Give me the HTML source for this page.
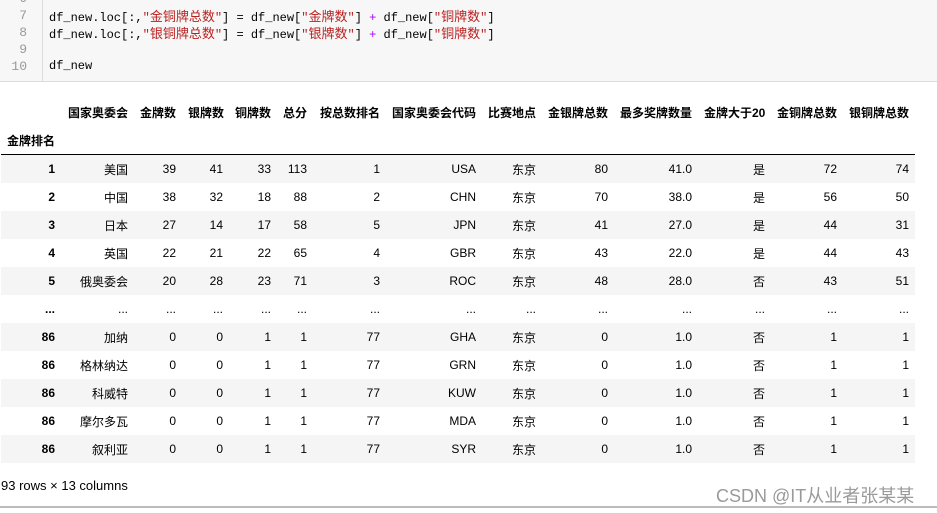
<!DOCTYPE html>
<html><head><meta charset="utf-8"><style>
body{margin:0;width:937px;height:513px;background:#fff;position:relative;overflow:hidden;font-family:"Liberation Sans","Noto Sans CJK SC",sans-serif;}
.code{position:absolute;left:0;top:0;width:937px;height:81px;background:#f7f7f7;border-bottom:1px solid #dcdcdc;}
.gut{position:absolute;left:0;top:0;width:42px;height:81px;border-right:1px solid #ddd;}
.ln{position:absolute;width:27px;text-align:right;color:#999;font:13px "Liberation Mono","Noto Sans CJK SC",monospace;}
.cl{position:absolute;left:49px;font:12px "Liberation Mono","Noto Sans CJK SC",monospace;color:#000;white-space:pre;line-height:17px;}
.cl .c{font-size:13px;font-family:"Noto Sans CJK SC",sans-serif;}
.s{color:#ba2121}.p{color:#a0f}
table{position:absolute;left:1px;top:98px;width:914px;border-collapse:collapse;table-layout:fixed;font-size:12px;color:#000;}
td,th{padding:0 6px;text-align:right;white-space:nowrap;height:28px;overflow:hidden;}
thead th{font-weight:bold;vertical-align:middle;}
thead tr.b th{border-bottom:1px solid #000;}
tbody tr:nth-child(odd){background:#f5f5f5;}
tbody th{font-weight:bold;}
.foot{position:absolute;left:1px;top:478px;font-size:13px;color:#000;}
.wm{position:absolute;left:716px;top:482px;font-size:18px;color:#9a9a9a;}
.bl{position:absolute;left:0;top:506px;width:937px;height:2px;background:#bbb;}
</style></head><body>
<div class="code"><div class="gut"></div>
<div class="ln" style="top:-9px">6</div>
<div class="ln" style="top:8px">7</div>
<div class="ln" style="top:25px">8</div>
<div class="ln" style="top:42px">9</div>
<div class="ln" style="top:59px">10</div>
<div class="cl" style="top:7px">df_new.loc[:,<span class="s">"<span class="c">金铜牌总数</span>"</span>] = df_new[<span class="s">"<span class="c">金牌数</span>"</span>] <span class="p">+</span> df_new[<span class="s">"<span class="c">铜牌数</span>"</span>]</div>
<div class="cl" style="top:24px">df_new.loc[:,<span class="s">"<span class="c">银铜牌总数</span>"</span>] = df_new[<span class="s">"<span class="c">银牌数</span>"</span>] <span class="p">+</span> df_new[<span class="s">"<span class="c">铜牌数</span>"</span>]</div>
<div class="cl" style="top:58px">df_new</div>
</div>
<table>
<colgroup><col style="width:60px"><col style="width:73px"><col style="width:48px"><col style="width:47px"><col style="width:48px"><col style="width:36px"><col style="width:73px"><col style="width:96px"><col style="width:60px"><col style="width:72px"><col style="width:84px"><col style="width:73px"><col style="width:72px"><col style="width:72px"></colgroup>
<thead>
<tr><th></th><th>国家奥委会</th><th>金牌数</th><th>银牌数</th><th>铜牌数</th><th>总分</th><th>按总数排名</th><th>国家奥委会代码</th><th>比赛地点</th><th>金银牌总数</th><th>最多奖牌数量</th><th>金牌大于20</th><th>金铜牌总数</th><th>银铜牌总数</th></tr>
<tr class="b"><th style="text-align:left">金牌排名</th><th></th><th></th><th></th><th></th><th></th><th></th><th></th><th></th><th></th><th></th><th></th><th></th><th></th></tr>
</thead>
<tbody>
<tr><th>1</th><td>美国</td><td>39</td><td>41</td><td>33</td><td>113</td><td>1</td><td>USA</td><td>东京</td><td>80</td><td>41.0</td><td>是</td><td>72</td><td>74</td></tr>
<tr><th>2</th><td>中国</td><td>38</td><td>32</td><td>18</td><td>88</td><td>2</td><td>CHN</td><td>东京</td><td>70</td><td>38.0</td><td>是</td><td>56</td><td>50</td></tr>
<tr><th>3</th><td>日本</td><td>27</td><td>14</td><td>17</td><td>58</td><td>5</td><td>JPN</td><td>东京</td><td>41</td><td>27.0</td><td>是</td><td>44</td><td>31</td></tr>
<tr><th>4</th><td>英国</td><td>22</td><td>21</td><td>22</td><td>65</td><td>4</td><td>GBR</td><td>东京</td><td>43</td><td>22.0</td><td>是</td><td>44</td><td>43</td></tr>
<tr><th>5</th><td>俄奥委会</td><td>20</td><td>28</td><td>23</td><td>71</td><td>3</td><td>ROC</td><td>东京</td><td>48</td><td>28.0</td><td>否</td><td>43</td><td>51</td></tr>
<tr><th>...</th><td>...</td><td>...</td><td>...</td><td>...</td><td>...</td><td>...</td><td>...</td><td>...</td><td>...</td><td>...</td><td>...</td><td>...</td><td>...</td></tr>
<tr><th>86</th><td>加纳</td><td>0</td><td>0</td><td>1</td><td>1</td><td>77</td><td>GHA</td><td>东京</td><td>0</td><td>1.0</td><td>否</td><td>1</td><td>1</td></tr>
<tr><th>86</th><td>格林纳达</td><td>0</td><td>0</td><td>1</td><td>1</td><td>77</td><td>GRN</td><td>东京</td><td>0</td><td>1.0</td><td>否</td><td>1</td><td>1</td></tr>
<tr><th>86</th><td>科威特</td><td>0</td><td>0</td><td>1</td><td>1</td><td>77</td><td>KUW</td><td>东京</td><td>0</td><td>1.0</td><td>否</td><td>1</td><td>1</td></tr>
<tr><th>86</th><td>摩尔多瓦</td><td>0</td><td>0</td><td>1</td><td>1</td><td>77</td><td>MDA</td><td>东京</td><td>0</td><td>1.0</td><td>否</td><td>1</td><td>1</td></tr>
<tr><th>86</th><td>叙利亚</td><td>0</td><td>0</td><td>1</td><td>1</td><td>77</td><td>SYR</td><td>东京</td><td>0</td><td>1.0</td><td>否</td><td>1</td><td>1</td></tr>
</tbody>
</table>
<div class="foot">93 rows × 13 columns</div>
<div class="wm">CSDN @IT从业者张某某</div>
<div class="bl"></div>
</body></html>
